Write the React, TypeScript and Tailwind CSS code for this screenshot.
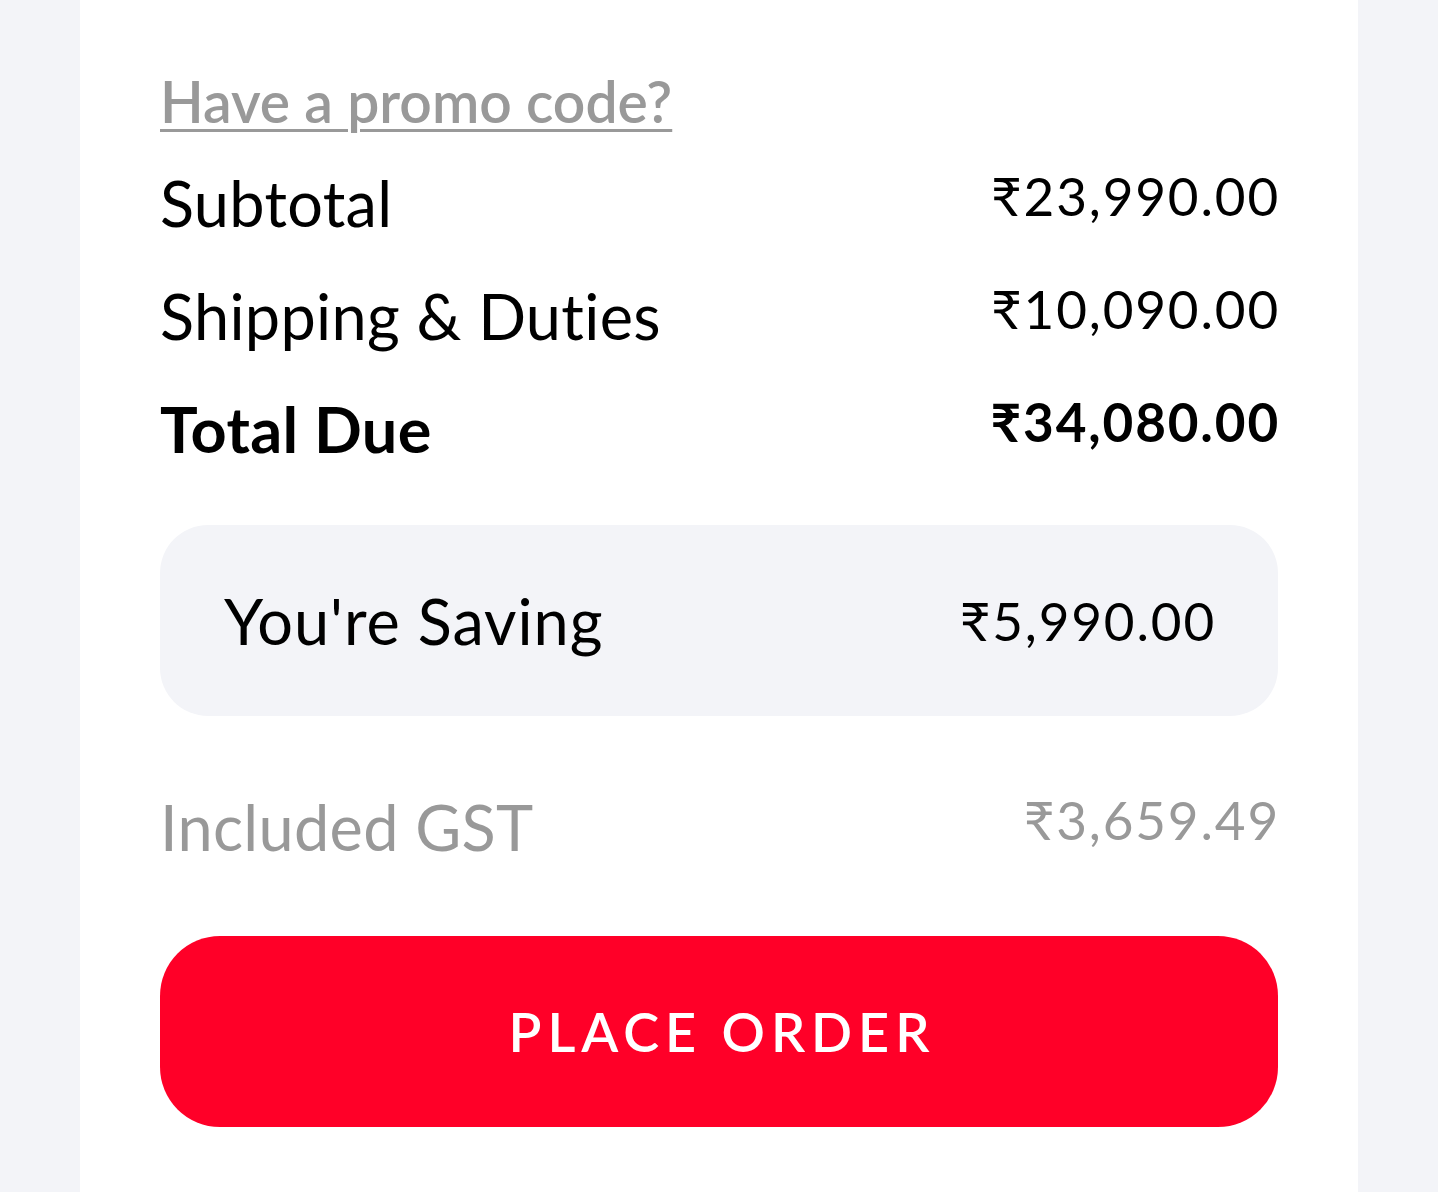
import React from "react";

const font = { fontFamily: "Lato, 'Noto Sans', 'DejaVu Sans', sans-serif" };

function Row({ label, value, className = "" }: { label: string; value: string; className?: string }) {
  return (
    <div className={"flex items-start justify-between " + className}>
      <span className="text-[63px] leading-[74px] tracking-[0.005em]">{label}</span>
      <span className="-mr-[2px] text-[53px] leading-[60px] tracking-[0.035em]">{value}</span>
    </div>
  );
}

export default function App() {
  return (
    <div className="min-h-[1192px] bg-[#f3f4f8] px-[80px] [font-variant-ligatures:none]" style={font}>
      <div className="min-h-[1192px] bg-white px-[80px] pt-[66px] text-black">
        <a className="text-[57px] leading-[70px] font-semibold text-[#999999] underline decoration-[3px] underline-offset-[6px]">
          Have a promo code?
        </a>
        <div className="mt-[30px] flex flex-col gap-[39px]">
          <Row label="Subtotal" value="₹23,990.00" />
          <Row label="Shipping & Duties" value="₹10,090.00" />
          <Row label="Total Due" value="₹34,080.00" className="font-bold" />
        </div>
        <div className="mt-[59px] flex h-[191px] items-center justify-between rounded-[48px] bg-[#f3f4f8] px-[64px]">
          <span className="text-[63px] leading-[74px] tracking-[0.015em]">You're Saving</span>
          <span className="-mr-[2px] text-[53px] leading-[60px] tracking-[0.035em]">₹5,990.00</span>
        </div>
        <Row label="Included GST" value="₹3,659.49" className="mt-[74px] text-[#999999]" />
        <button className="mt-[72px] flex h-[191px] w-full items-center justify-center rounded-[60px] bg-[#ff0028] pl-[6px] text-[54px] font-semibold tracking-[0.11em] text-white">
          PLACE ORDER
        </button>
      </div>
    </div>
  );
}
